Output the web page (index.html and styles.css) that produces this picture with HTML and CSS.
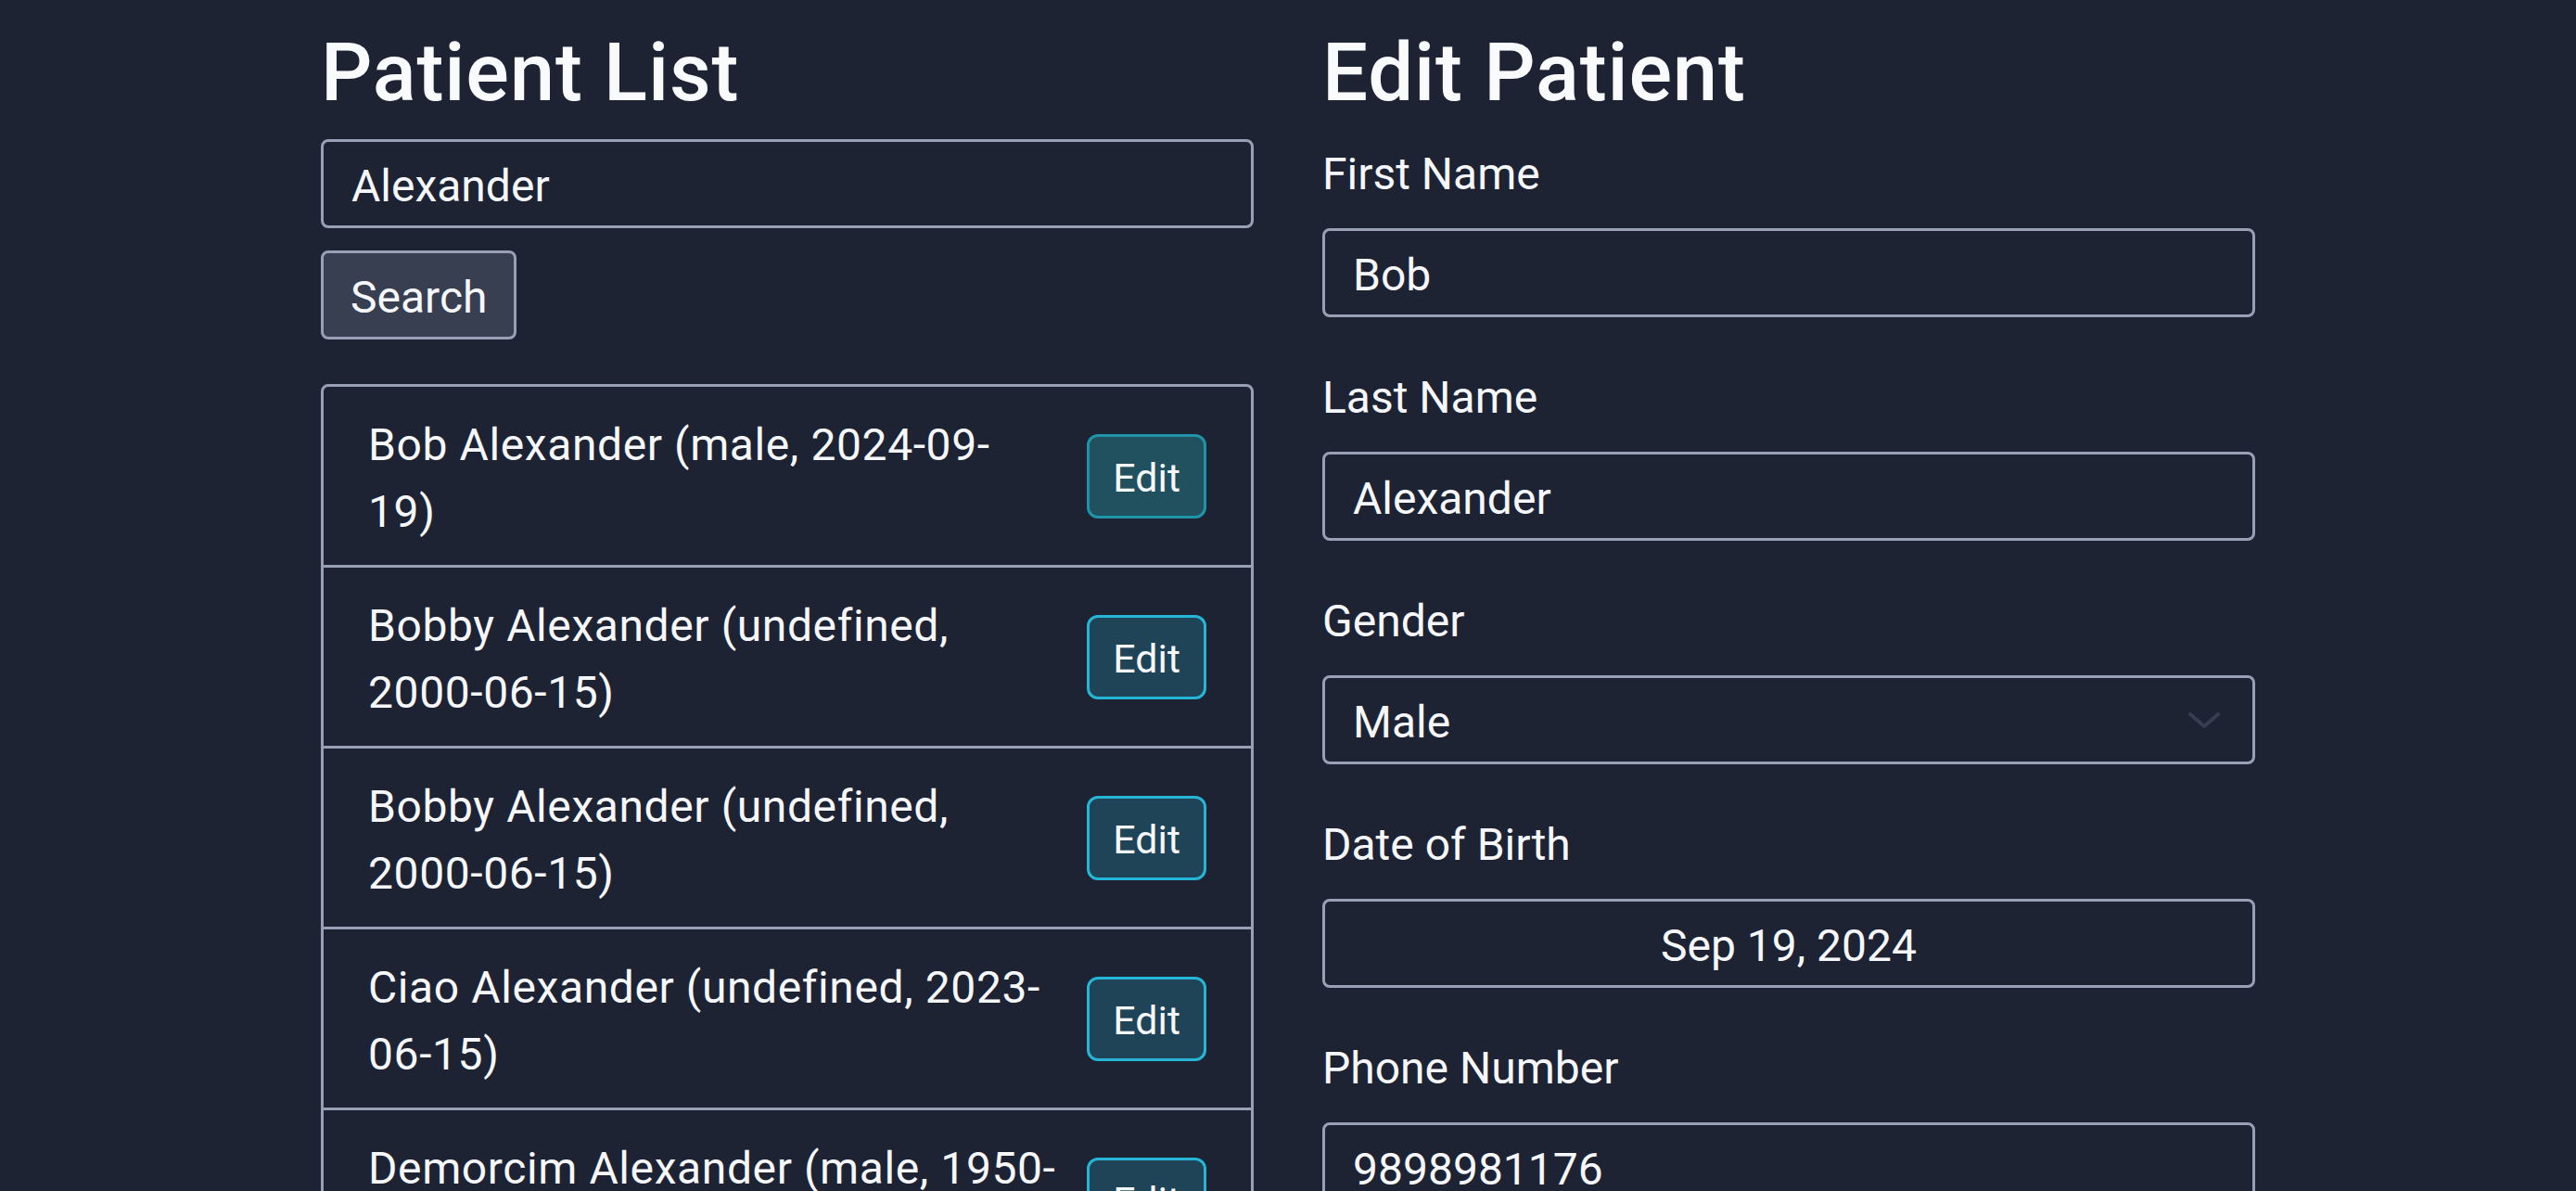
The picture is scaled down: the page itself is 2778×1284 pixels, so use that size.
FILE: index.html
```html
<!DOCTYPE html>
<html lang="en">
<head>
<meta charset="utf-8">
<title>Patients</title>
<link rel="stylesheet" href="styles.css">
</head>
<body>
<main class="page">
  <section class="col">
    <h1 class="title">Patient List</h1>
    <input class="field" type="text" value="Alexander">
    <button class="btn-search" type="button">Search</button>
    <ul class="list">
      <li class="row"><span class="row-text">Bob Alexander (male, 2024-09-<br>19)</span><button class="btn-edit is-active" type="button">Edit</button></li>
      <li class="row"><span class="row-text">Bobby Alexander (undefined,<br>2000-06-15)</span><button class="btn-edit" type="button">Edit</button></li>
      <li class="row"><span class="row-text">Bobby Alexander (undefined,<br>2000-06-15)</span><button class="btn-edit" type="button">Edit</button></li>
      <li class="row"><span class="row-text">Ciao Alexander (undefined, 2023-<br>06-15)</span><button class="btn-edit" type="button">Edit</button></li>
      <li class="row"><span class="row-text">Demorcim Alexander (male, 1950-<br>01-01)</span><button class="btn-edit" type="button">Edit</button></li>
    </ul>
  </section>
  <section class="col">
    <h1 class="title">Edit Patient</h1>
    <form class="form">
      <div class="group">
        <label class="label" for="fn">First Name</label>
        <input class="field" id="fn" type="text" value="Bob">
      </div>
      <div class="group">
        <label class="label" for="ln">Last Name</label>
        <input class="field" id="ln" type="text" value="Alexander">
      </div>
      <div class="group">
        <label class="label" for="gd">Gender</label>
        <div class="select-wrap">
          <select class="field select" id="gd">
            <option>Male</option>
            <option>Female</option>
          </select>
          <svg class="chevron" viewBox="0 0 34 18" width="34" height="18" aria-hidden="true"><polyline points="2,2 17,15 32,2" fill="none" stroke="currentColor" stroke-width="4" stroke-linecap="round" stroke-linejoin="round"/></svg>
        </div>
      </div>
      <div class="group">
        <label class="label" for="dob">Date of Birth</label>
        <input class="field date" id="dob" type="text" value="Sep 19, 2024">
      </div>
      <div class="group">
        <label class="label" for="ph">Phone Number</label>
        <input class="field" id="ph" type="text" value="9898981176">
      </div>
    </form>
  </section>
</main>
</body>
</html>
```
FILE: styles.css
```css
html, body {
  margin: 0;
  padding: 0;
  overflow: hidden;
}
body {
  background: #1e2334;
  color: #f5f7fb;
  font-family: Roboto, "Liberation Sans", sans-serif;
  font-size: 48px;
  line-height: 72px;
}
.page {
  width: 2086px;
  margin: 0 auto;
  padding-top: 28px;
  display: grid;
  grid-template-columns: 1006px 1006px;
  column-gap: 74px;
  align-items: start;
}
.col {
  display: flex;
  flex-direction: column;
  align-items: flex-start;
}
.title {
  margin: 0 0 21px;
  font-size: 87px;
  line-height: 101px;
  font-weight: 500;
  letter-spacing: 0.8px;
  color: #f8fafc;
}
.field {
  box-sizing: border-box;
  width: 100%;
  height: 96px;
  margin: 0;
  padding: 4px 30px 0;
  background: #1e2334;
  color: #f5f7fb;
  border: 3px solid #97a0b5;
  border-radius: 8px;
  font-family: inherit;
  font-size: 48px;
  outline: none;
}
.btn-search {
  margin-top: 24px;
  height: 96px;
  padding: 4px 29px 0;
  background: #383f51;
  color: #f5f7fb;
  border: 3px solid #97a0b5;
  border-radius: 8px;
  font-family: inherit;
  font-size: 48px;
}
.list {
  list-style: none;
  margin: 48px 0 0;
  padding: 0;
  width: 100%;
  box-sizing: border-box;
  border: 3px solid #97a0b5;
  border-radius: 8px;
}
.row {
  display: flex;
  align-items: center;
  gap: 24px;
  padding: 24px 48px;
  border-bottom: 3px solid #97a0b5;
}
.row-text {
  flex: 1;
  padding-top: 3px;
  margin-bottom: -3px;
  letter-spacing: 0.6px;
}
.btn-edit {
  height: 91px;
  padding: 3px 25px 0;
  background: #1f4357;
  color: #f5f7fb;
  border: 3px solid #25b5d5;
  border-radius: 12px;
  font-family: inherit;
  font-size: 43px;
}
.btn-edit.is-active {
  background: #21505f;
  border-color: #1f94a9;
}
.form {
  width: 100%;
  display: flex;
  flex-direction: column;
}
.group {
  display: flex;
  flex-direction: column;
  margin-bottom: 49px;
}
.label {
  line-height: 69px;
  padding-top: 3px;
  margin-bottom: 24px;
}
.select-wrap {
  position: relative;
}
.select {
  appearance: none;
  -webkit-appearance: none;
}
.chevron {
  position: absolute;
  right: 38px;
  top: 40px;
  color: #363d52;
  pointer-events: none;
}
.date {
  text-align: center;
}
```
